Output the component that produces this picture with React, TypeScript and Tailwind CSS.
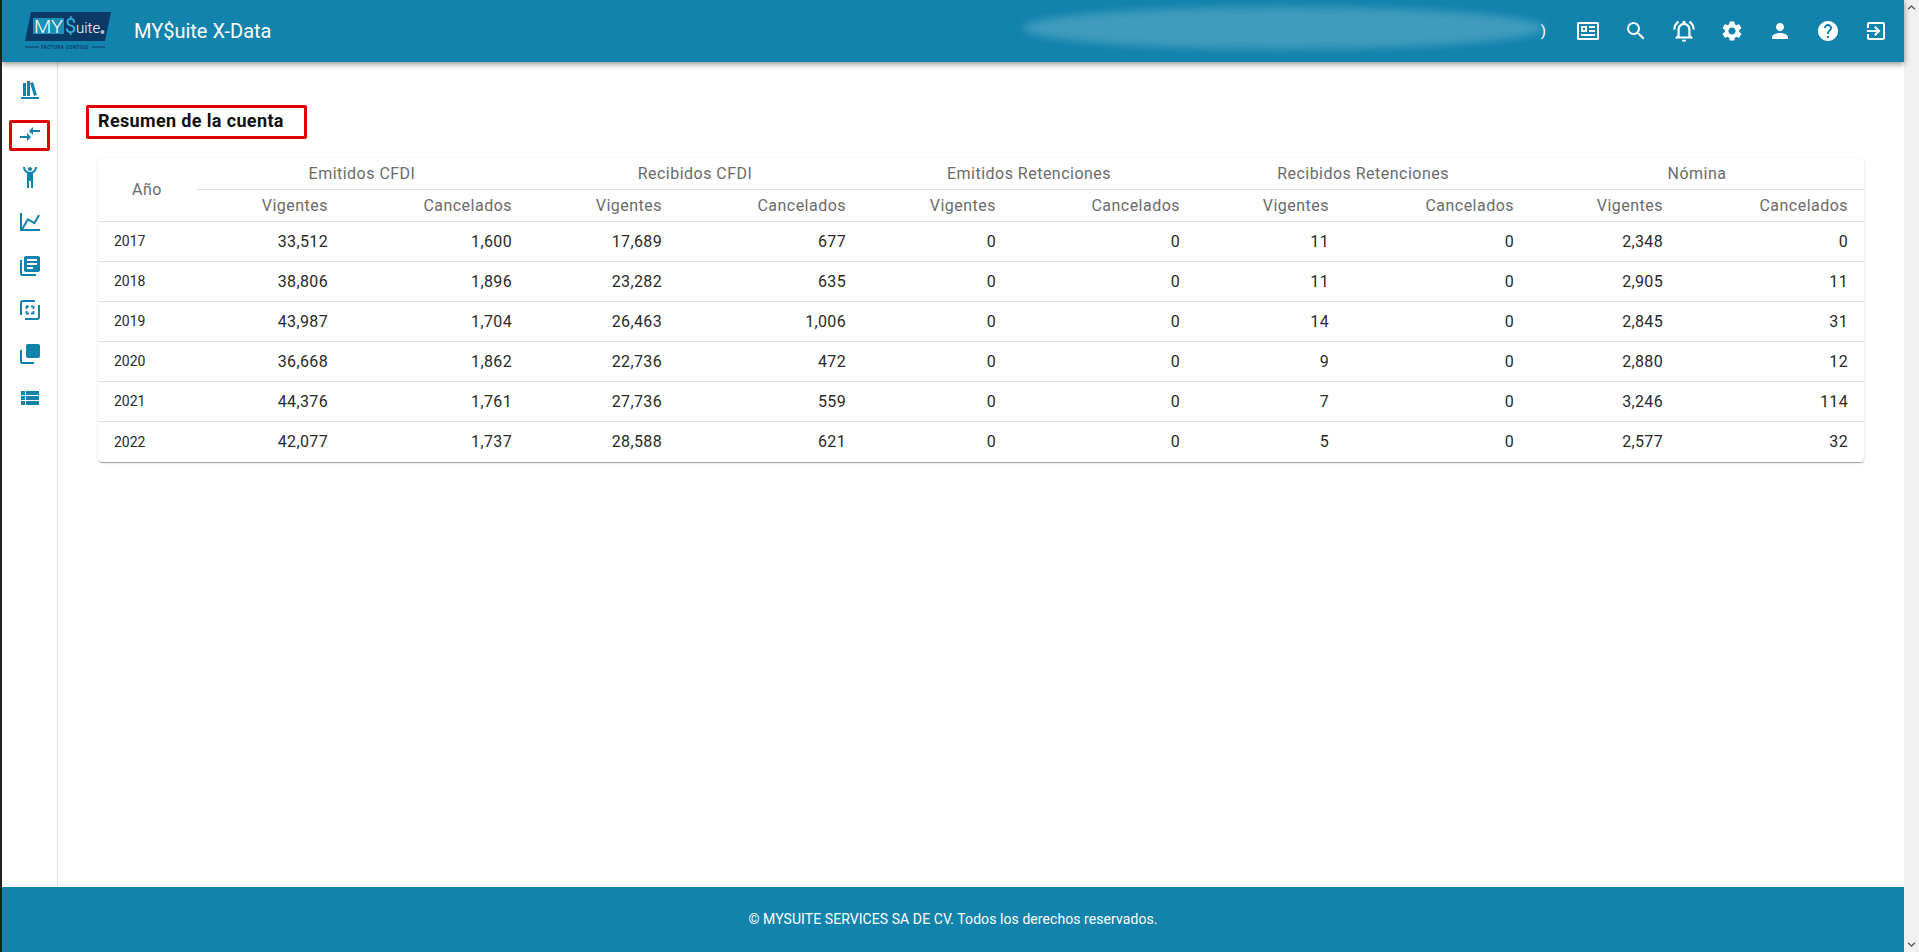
import React from "react";
import { MdSearch, MdOutlineNotificationsActive, MdSettings, MdPerson, MdHelp, MdExitToApp, MdCompareArrows, MdLibraryBooks, MdViewList, MdKeyboardArrowUp, MdKeyboardArrowDown } from "react-icons/md";

const P = ({ d }: { d: string }) => (
  <svg viewBox="0 0 24 24" width="24" height="24" fill="currentColor"><path d={d} /></svg>
);

const Newspaper = () => (
  <svg viewBox="0 0 24 24" width="24" height="24" fill="currentColor">
    <path d="M2.5 3h19A1.5 1.5 0 0 1 23 4.5v15a1.5 1.5 0 0 1-1.5 1.5h-19A1.5 1.5 0 0 1 1 19.500v-15A1.500 1.500 0 0 1 2.500 3zM3 5v14h18V5H3z" fillRule="evenodd" />
    <path d="M5 7h6v6H5zM13 7h6v2h-6zM13 11h6v2h-6zM5 15h14v2H5z" />
    <path d="M7 9h2v2H7z" fill="#1283ad" />
  </svg>
);

const SelectGroup = () => (
  <svg viewBox="0 0 24 24" width="24" height="24" fill="none" stroke="currentColor" strokeWidth="2">
    <path d="M17 3H5a2 2 0 0 0-2 2v12" />
    <path d="M21 7v12a2 2 0 0 1-2 2H7" />
    <path d="M8.500 11V8.500H11M13 8.500h2.500V11M15.500 13v2.500H13M11 15.500H8.500V13" strokeWidth="1.800" />
  </svg>
);

const Blank = () => (
  <svg viewBox="0 0 24 24" width="24" height="24" fill="currentColor">
    <path d="M10 2h10a2 2 0 0 1 2 2v10a2 2 0 0 1-2 2H10a2 2 0 0 1-2-2V4a2 2 0 0 1 2-2z" />
    <path d="M4 6h2v12a0 0 0 0 0 0 0h12v2H6a2 2 0 0 1-2-2z" transform="translate(-2 2)" />
  </svg>
);

const Logo = () => (
  <svg width="90" height="44" viewBox="0 0 90 44" className="shrink-0">
    <polygon points="6,0 86,0 80,29 0,29" fill="#0b3a66" />
    <rect x="8" y="6" width="31" height="16" fill="#1a8fb8" />
    <text x="9" y="21" fontFamily="'Roboto',sans-serif" fontSize="18.500" fontWeight="300" fill="#ffffff" textLength="29" lengthAdjust="spacingAndGlyphs">MY</text>
    <text x="40" y="21" fontFamily="'Roboto',sans-serif" fontSize="20" fontWeight="400" fill="#2fb4e0">$</text>
    <text x="51" y="21" fontFamily="'Roboto',sans-serif" fontSize="15" fontWeight="300" fill="#ffffff">uite</text>
    <circle cx="77.500" cy="20" r="2" fill="#a9c3d4" />
    <path d="M0 35h14M67 35h13" stroke="#0b3a66" strokeWidth="1" />
    <text x="40" y="37" fontFamily="'Roboto',sans-serif" fontSize="4.500" fontWeight="700" fill="#0b3a66" letterSpacing=".5" textAnchor="middle">FACTURA CONTIGO</text>
  </svg>
);

const sideIcons: React.ReactNode[] = [
  <P d="M9 3V18H12V3H9M12 5L16 18L19 17L15 4L12 5M5 5V18H8V5H5M3 19V21H21V19H3Z" />,
  <MdCompareArrows size={24} />,
  <P d="M5,1C5,3.7 6.56,6.16 9,7.32V22H11V15H13V22H15V7.31C17.44,6.16 19,3.7 19,1H17A5,5 0 0,1 12,6A5,5 0 0,1 7,1M12,1C10.89,1 10,1.89 10,3C10,4.11 10.89,5 12,5C13.11,5 14,4.11 14,3C14,1.89 13.11,1 12,1Z" />,
  <P d="M16 11.780L20.240 4.450L21.970 5.450L16.740 14.500L10.230 10.750L5.460 19H22V21H2V3H4V17.540L9.500 8L16 11.780Z" />,
  <MdLibraryBooks size={24} />,
  <SelectGroup />,
  <Blank />,
  <MdViewList size={24} />,
];

const headerIcons: React.ReactNode[] = [
  <Newspaper />,
  <MdSearch size={24} />,
  <MdOutlineNotificationsActive size={26} />,
  <MdSettings size={24} />,
  <MdPerson size={24} />,
  <MdHelp size={24} />,
  <MdExitToApp size={24} />,
];

const groups = ["Emitidos CFDI", "Recibidos CFDI", "Emitidos Retenciones", "Recibidos Retenciones", "Nómina"];

const rows: string[][] = [
  ["2017", "33,512", "1,600", "17,689", "677", "0", "0", "11", "0", "2,348", "0"],
  ["2018", "38,806", "1,896", "23,282", "635", "0", "0", "11", "0", "2,905", "11"],
  ["2019", "43,987", "1,704", "26,463", "1,006", "0", "0", "14", "0", "2,845", "31"],
  ["2020", "36,668", "1,862", "22,736", "472", "0", "0", "9", "0", "2,880", "12"],
  ["2021", "44,376", "1,761", "27,736", "559", "0", "0", "7", "0", "3,246", "114"],
  ["2022", "42,077", "1,737", "28,588", "621", "0", "0", "5", "0", "2,577", "32"],
];

export default function App() {
  return (
    <div className="flex h-[952px] w-[1919px] overflow-hidden border-l-2 border-[#202020] bg-white font-['Roboto',sans-serif]">
      <div className="flex min-w-0 flex-1 flex-col">
        <header className="relative z-10 flex h-[62px] shrink-0 items-center bg-[#1283ad] pl-[23px] pr-1 text-white shadow-[0_2px_6px_rgba(0,0,0,0.45)]">
          <div className="mt-[6px] flex h-[44px]">
            <Logo />
          </div>
          <span className="ml-[19px] text-[20px] leading-none">MY$uite X-Data</span>
          <div className="relative ml-auto flex h-full flex-1 items-center justify-end">
            <div className="absolute right-[355px] top-[7px] h-[42px] w-[522px] rounded-[50%] bg-white/20 blur-[4px]" />
            <span className="mr-[18px] text-[15px]">)</span>
            {headerIcons.map((ic, i) => (
              <div key={i} className="flex h-[48px] w-[48px] items-center justify-center">{ic}</div>
            ))}
          </div>
        </header>
        <div className="flex min-h-0 flex-1">
          <aside className="flex w-[56px] shrink-0 flex-col border-r border-[#e0e0e0] pt-[6px] text-[#1283ad]">
            {sideIcons.map((ic, i) => (
              <div key={i} className="relative flex h-[44px] items-center justify-center">
                {ic}
                {i === 1 && <span className="absolute left-[7px] top-[8px] h-[31px] w-[41px] rounded-[2px] border-[3px] border-[#e00000]" />}
              </div>
            ))}
          </aside>
          <main className="min-w-0 flex-1 px-[40px] pt-[43px]">
            <div className="-ml-[12px] flex h-[34px] w-[221px] items-center rounded-[2px] border-[3px] border-[#e00000] pb-[2px] pl-[9px] text-[18px] font-bold leading-none tracking-[0.02em] text-[#111]">
              Resumen de la cuenta
            </div>
            <div className="mt-[19px] overflow-hidden rounded bg-white shadow-[0_2px_1px_-1px_rgba(0,0,0,0.2),0_1px_1px_0_rgba(0,0,0,0.14),0_1px_3px_0_rgba(0,0,0,0.12)]">
              <table className="w-full table-fixed border-collapse">
                <colgroup>
                  <col className="w-[98px]" />
                  <col className="w-[148px]" />
                  <col className="w-[184px]" />
                  <col className="w-[150px]" />
                  <col className="w-[184px]" />
                  <col className="w-[150px]" />
                  <col className="w-[184px]" />
                  <col className="w-[149px]" />
                  <col className="w-[185px]" />
                  <col className="w-[149px]" />
                  <col className="w-[185px]" />
                </colgroup>
                <thead>
                  <tr className="h-[31px] text-[16px] text-[#6b6b6b]">
                    <th rowSpan={2} className="border-b border-[#e0e0e0] pt-[2px] text-center font-normal tracking-[0.03em]">Año</th>
                    {groups.map((g) => (
                      <th key={g} colSpan={2} className="border-b border-[#e0e0e0] pt-[2px] text-center font-normal tracking-[0.03em]">{g}</th>
                    ))}
                  </tr>
                  <tr className="h-[32px] text-[16px] text-[#6b6b6b]">
                    {Array.from({ length: 10 }, (_, i) => (
                      <th key={i} className="border-b border-[#e0e0e0] pr-[16px] pt-[2px] text-right font-normal tracking-[0.03em]">
                        {i % 2 === 0 ? "Vigentes" : "Cancelados"}
                      </th>
                    ))}
                  </tr>
                </thead>
                <tbody>
                  {rows.map((r, ri) => (
                    <tr key={r[0]} className={ri === rows.length - 1 ? "h-[41px]" : "h-[40px]"}>
                      {r.map((c, ci) => (
                        <td
                          key={ci}
                          className={
                            (ri < rows.length - 1 ? "border-b border-[#e0e0e0] " : "") +
                            (ci === 0 ? "pl-[16px] pt-px text-[14px] text-[#2a2a2a]" : "pr-[16px] pt-px text-right text-[16px] tracking-[0.022em] text-[#2a2a2a]")
                          }
                        >
                          {c}
                        </td>
                      ))}
                    </tr>
                  ))}
                </tbody>
              </table>
            </div>
          </main>
        </div>
        <footer className="flex h-[65px] shrink-0 items-center justify-center bg-[#1283ad] text-[14px] font-normal tracking-[0.005em] text-white">
          © MYSUITE SERVICES SA DE CV. Todos los derechos reservados.
        </footer>
      </div>
      <div className="flex w-[15px] shrink-0 flex-col items-center justify-between bg-[#f1f1f1] text-[#505050]">
        <MdKeyboardArrowUp size={15} />
        <MdKeyboardArrowDown size={15} />
      </div>
    </div>
  );
}
